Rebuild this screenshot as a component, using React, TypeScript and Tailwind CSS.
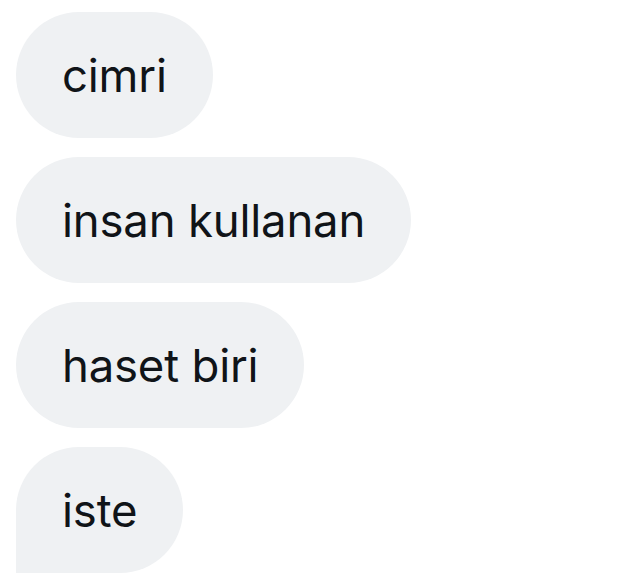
import React from "react";

const msgs = ["cimri", "insan kullanan", "haset biri", "iste"];

export default function App() {
  return (
    <div className="w-[639px] h-[580px] bg-white overflow-hidden pt-[12px] pl-[16px] flex flex-col items-start gap-[19px]" style={{ fontFamily: "Inter, 'Noto Sans', sans-serif" }}>
      {msgs.map((m, i) => (
        <div
          key={m}
          className={`h-[126px] flex items-center px-[46px] bg-[#eff1f3] text-[#101418] text-[45.5px] tracking-[-0.2px] rounded-full ${i === msgs.length - 1 ? "rounded-bl-[8px]" : ""}`}
        >
          <span className="leading-none pt-[1px]">{m}</span>
        </div>
      ))}
    </div>
  );
}
